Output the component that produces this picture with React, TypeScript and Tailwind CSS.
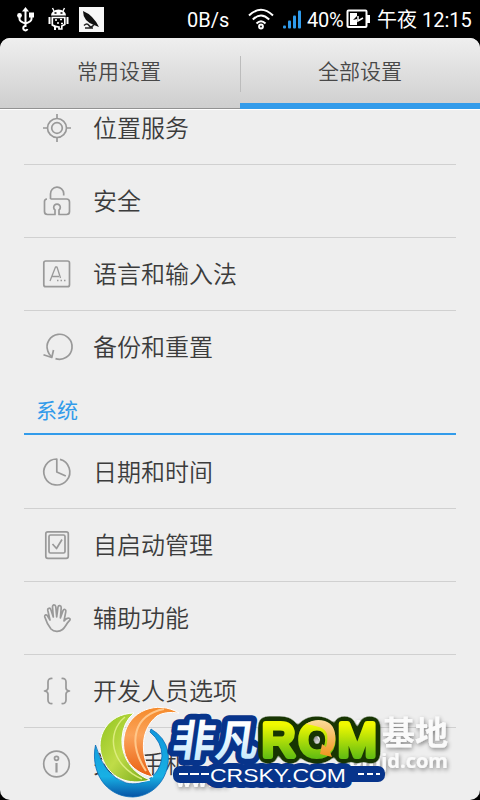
import type { ReactNode } from "react"

interface SettingItem {
  label: string
  icon: ReactNode
}

const generalItems: SettingItem[] = [
  {
    label: "位置服务",
    icon: (
      <>
        <circle cx="15" cy="15" r="9.5" />
        <circle cx="15" cy="15" r="5.3" />
        <path d="M15 1v5M15 24v5M1 15h5M24 15h5" />
      </>
    ),
  },
  {
    label: "安全",
    icon: (
      <>
        <path d="M8.500 13V8a6.600 6.600 0 0 1 13.200-.6v2" />
        <path d="M5 13q-2.500.3-2.500 2.500v10q0 3 3 3h7.500v-4.500a3.300 3.300 0 1 1 4 0v4.500h7.500q3 0 3-3v-9.500q0-3-3-3h-16" />
      </>
    ),
  },
  {
    label: "语言和输入法",
    icon: (
      <>
        <rect x="1.8" y="2" width="25.7" height="25.7" rx="2" />
        <path d="M8 22l5.500-14h1.500l3.500 11M10 17.500h7" strokeWidth="1.3" />
        <path d="M15 21.500h1.500M18.500 21.500h1.500M22 21.500h1.500" />
      </>
    ),
  },
  {
    label: "备份和重置",
    icon: (
      <>
        <path d="M13.500 26.600A12.500 12.500 0 1 0 5.800 19q.7 3 4 6" />
        <path d="M1.500 22.800l8.300 2.700L11.500 18" />
      </>
    ),
  },
]

const systemItems: SettingItem[] = [
  {
    label: "日期和时间",
    icon: <path d="M18 2.400A13 13 0 1 1 14.800 2v13l9 4" />,
  },
  {
    label: "自启动管理",
    icon: (
      <>
        <rect x="3.800" y="1.800" width="22.500" height="26.500" rx="2" />
        <rect x="7" y="5" width="16" height="18" rx="1.500" />
        <path d="M10.500 14l4 4.500L20 9.500" />
      </>
    ),
  },
  {
    label: "辅助功能",
    icon: (
      <path d="M9 26C6 22 4 18 2.800 14c-.6-2.500 2-3 2.900-.8L8 17 5.800 7.500C5.300 5 8.200 4.300 8.900 6.800L11.300 14 10.500 4c-.1-2.700 3-2.700 3.300-.1l.9 10L16 4.200c.4-2.400 3.400-2 3.200.5l-.8 10.200 2.600-7.300c.9-2.100 3.400-1.300 2.800 1L22 18c2-2.800 3.500-3.400 5.200-2.800 1.800.7.800 2-.2 3-3 3-3.800 6.200-6.500 8.300-3.200 2.700-8.500 2.500-11.500-.5z" />
    ),
  },
  {
    label: "开发人员选项",
    icon: (
      <>
        <path d="M10.500 2.500Q6 2 6 6v6q0 2.500-3.500 3Q6 15.500 6 18v6q0 4 4.500 3.500" />
        <path d="M19.500 2.500Q24 2 24 6v6q0 2.500 3.500 3Q24 15.500 24 18v6q0 4-4.500 3.500" />
      </>
    ),
  },
  {
    label: "关于手机",
    icon: (
      <>
        <circle cx="14.500" cy="15" r="12.800" />
        <circle cx="14.500" cy="9.300" r="2" />
        <path d="M14.500 14v9.500" strokeWidth="2.200" />
      </>
    ),
  },
]

function StatusBar() {
  return (
    <div className="flex h-[38px] items-center whitespace-nowrap font-[Roboto,'Noto_Sans_CJK_SC',sans-serif] text-[20px] text-white">
      {/* usb */}
      <svg className="ml-[16px] h-[26px] w-[20px]" viewBox="0 0 20 26" fill="none" stroke="white" strokeWidth="2">
        <path d="M9.500 4v17M3.500 10v3q0 2.500 6 4.500 6-2 6-4.500v-3" />
        <path d="M9.500 1l3.500 4.500H6z" fill="white" stroke="none" />
        <circle cx="3.500" cy="9.500" r="2.400" fill="white" stroke="none" />
        <path d="M13 6.500h5v5h-5z" fill="white" stroke="none" />
        <path d="M9.500 20a2.200 2.200 0 1 0 2 3" />
      </svg>
      {/* debug robot */}
      <svg className="ml-[12px] h-[26px] w-[21px]" viewBox="0 0 21 26">
        <path d="M3 9.500a7.500 6 0 0 1 15 0z" fill="white" />
        <path d="M6 5L4.500 2M15 5l1.500-3" stroke="white" strokeWidth="1.400" />
        <path d="M6.500 7h2M12.500 7h2" stroke="black" strokeWidth="1.500" />
        <path d="M4.300 11.500h12.500v7l-3 1.500v3H11V21q-4 0-6.700-2z" fill="none" stroke="white" strokeWidth="1.700" />
        <path d="M1.500 11v7M19.500 11v7M7 21v3" stroke="white" strokeWidth="2" />
        <path d="M7 14h2M12 13.500h2M9 17h2M13 17.500h2" stroke="white" strokeWidth="1.500" />
      </svg>
      {/* app notification */}
      <svg className="ml-[10px] h-[25px] w-[25px]" viewBox="0 0 25 25">
        <path d="M0 0h25v25H0z" fill="#f7f7f7" />
        <path d="M4 4q10 4 16 16l-5-2Q4 14 4 4z" fill="#111" />
        <path d="M5 18.500q3-3 5 0t5-1M6 21h8" fill="none" stroke="#222" strokeWidth="1.500" />
      </svg>
      <span className="ml-[83px] mt-[2px] w-[43px] leading-none">0B/s</span>
      {/* wifi */}
      <svg className="ml-[18px] h-[22px] w-[26px]" viewBox="0 0 26 22" fill="none" stroke="white" strokeWidth="2">
        <path d="M1 7.500q12-11.500 24 0M4.800 11.500q8.200-8 16.400 0M8.500 15.500q4.500-4.500 9 0" />
        <circle cx="13" cy="18.500" r="1.900" />
      </svg>
      {/* signal */}
      <svg className="ml-[9px] h-[19px] w-[19px]" viewBox="0 0 19 19" fill="#2f9bec">
        <rect x="0" y="15.500" width="3" height="3" rx="1" />
        <rect x="5" y="10.500" width="3" height="8" rx="1" />
        <rect x="10" y="5.500" width="3" height="13" rx="1" />
        <rect x="15" y="0.500" width="3" height="18" rx="1" />
      </svg>
      <span className="ml-[5px] mt-[2px] w-[37px] leading-none tracking-[-0.3px]">40%</span>
      {/* battery */}
      <svg className="ml-[2px] h-[20px] w-[25px]" viewBox="0 0 25 20" fill="none" stroke="white" strokeWidth="2">
        <rect x="1.500" y="1.500" width="19" height="16.500" rx="1" />
        <path d="M22.500 6v8" strokeWidth="3" />
        <path d="M4 4h7v3l-4 4 4-1v6H4z" fill="white" stroke="none" />
        <path d="M12 7v5l5-3" strokeWidth="1.500" />
      </svg>
      <span className="ml-[6px] mt-[2px] leading-none">午夜 12:15</span>
    </div>
  )
}

function SettingRow({ label, icon }: SettingItem) {
  return (
    <div className="flex h-[73px] items-center border-b border-[#d0d0d0] pl-[18px] last:border-transparent">
      <svg className="h-[30px] w-[30px] overflow-visible" viewBox="0 0 30 30" fill="none" stroke="#999" strokeWidth="1.7" strokeLinejoin="round">
        {icon}
      </svg>
      <span className="-mt-[2px] ml-[21px] text-[24px] font-[350] leading-[30px] text-[#3c3c3c]">{label}</span>
    </div>
  )
}

function Logo() {
  return (
    <svg className="absolute left-[80px] top-[690px] h-[110px] w-[400px]" viewBox="80 690 400 110">
      <defs>
        <linearGradient id="green" x1="0" y1="0" x2="1" y2="1">
          <stop offset="0" stopColor="#8fc31d" />
          <stop offset="0.5" stopColor="#c0dc48" />
          <stop offset="1" stopColor="#74a818" />
        </linearGradient>
        <linearGradient id="orange" x1="0" y1="0" x2="0" y2="1">
          <stop offset="0" stopColor="#f58a2a" />
          <stop offset="0.4" stopColor="#fba35a" />
          <stop offset="1" stopColor="#e95f10" />
        </linearGradient>
        <linearGradient id="blue" x1="0" y1="0" x2="0" y2="1">
          <stop offset="0" stopColor="#1098dc" />
          <stop offset="0.7" stopColor="#18b0e4" />
          <stop offset="1" stopColor="#0753a5" />
        </linearGradient>
        <linearGradient id="ice" x1="0" y1="0" x2="0" y2="1">
          <stop offset="0.3" stopColor="#fff" />
          <stop offset="1" stopColor="#b9e5fc" />
        </linearGradient>
        <linearGradient id="lime" gradientUnits="userSpaceOnUse" x1="0" y1="721" x2="0" y2="758">
          <stop offset="0.1" stopColor="#f0f900" />
          <stop offset="1" stopColor="#62bd12" />
        </linearGradient>
        <linearGradient id="gold" x1="0" y1="0" x2="0" y2="1">
          <stop offset="0" stopColor="#fbdc9a" />
          <stop offset="1" stopColor="#f0951c" />
        </linearGradient>
        <filter id="shade" x="-20%" y="-20%" width="140%" height="150%">
          <feDropShadow dx="1" dy="2" stdDeviation="2" floodColor="#000" floodOpacity="0.45" />
        </filter>
        {/* rounded outline around the lettering */}
        <filter id="rim" x="-20%" y="-30%" width="140%" height="160%" colorInterpolationFilters="sRGB">
          <feGaussianBlur in="SourceAlpha" stdDeviation="3" />
          <feComponentTransfer>
            <feFuncA type="linear" slope="18" intercept="-0.8" />
          </feComponentTransfer>
          <feComposite in2="SourceAlpha" operator="over" result="grown" />
          <feFlood floodColor="#173502" />
          <feComposite in2="grown" operator="in" />
          <feMerge>
            <feMergeNode />
            <feMergeNode in="SourceGraphic" />
          </feMerge>
        </filter>
      </defs>
      {/* site name behind the logo */}
      <g fill="#fafafa" filter="url(#shade)" fontWeight="700">
        <text x="448" y="745" textAnchor="end" fontSize="33" fontFamily="'Noto Sans CJK SC', sans-serif">ROM基地</text>
        <text x="448" y="768" textAnchor="end" fontSize="20" fontFamily="'Open Sans', sans-serif">romjd.com</text>
        <text x="176" y="787" fontSize="18" fontFamily="'Open Sans', sans-serif">www.</text>
      </g>
      {/* swirl */}
      <path d="M95.500 745C90 772 106 797 133 797C156 796 171 775 168 752Q165 737 151 729L150 732Q162 742 162 756C160 776 144 787 126 783Q104 776 95.500 745z" fill="url(#blue)" stroke="#086bb8" strokeWidth="0.8" />
      <path d="M134 713C107 714 95 737 102 757C109 778 128 786 150 780C132 773 121 757 122 738Q123 722 134 713z" fill="url(#green)" stroke="#fff" strokeWidth="1" />
      <path d="M125 717C105 733 111 766 142 779" fill="none" stroke="#dcec7c" strokeWidth="1.5" />
      <path d="M179 713C158 700 128 710 124 737C121 760 134 773 153 777C141 760 138 731 157 716Q165 711 179 713z" fill="url(#orange)" stroke="#fff" strokeWidth="1" />
      <path d="M164 709C134 715 127 742 146 771" fill="none" stroke="#ffc78a" strokeWidth="2" />
      {/* brand */}
      <g strokeLinejoin="round" paintOrder="stroke">
        <rect x="173" y="766" width="40" height="17" rx="7" fill="#07348b" />
        <rect x="344" y="766" width="41" height="16" rx="7" fill="#07348b" />
        <text x="210" y="782" fontSize="18" textLength="136" lengthAdjust="spacingAndGlyphs" fontFamily="'Liberation Sans', sans-serif" fill="#fff" stroke="#07348b" strokeWidth="12">CRSKY.COM</text>
        <text x="277" y="756" transform="skewX(-8)" fontSize="43" fontWeight="700" fontFamily="'Noto Sans CJK SC', sans-serif" fill="url(#ice)" stroke="#07348b" strokeWidth="12">非凡</text>
      </g>
      <text x="262 299 338" y="755.5" fontSize="46" fontFamily="'Liberation Sans', sans-serif" fill="url(#lime)" stroke="url(#lime)" strokeWidth="6" strokeLinejoin="round" filter="url(#rim)">ROM</text>
      <path d="M179 774h9M190 774h9M201 774h8M358 774h6M367 774h6M376 774h4" stroke="white" strokeWidth="2" />
      <path d="M306 724Q315 718 325 721Q337 725 335 742Q334 749 330 752L332 757L320 754L322 744L326 747Q331 730 319 727Q312 725 306 724z" fill="url(#gold)" />
    </svg>
  )
}

export default function App() {
  return (
    <div className="relative h-[800px] w-[480px] overflow-hidden bg-black font-['Noto_Sans_CJK_SC',sans-serif]">
      <StatusBar />
      <div className="h-[762px] overflow-hidden rounded-[10px] bg-[#eeeeee]">
        <div className="relative flex h-[71px] bg-linear-to-b from-[#efefef] to-[#cecece] text-[21px] font-[350] text-[#484848]">
          <div className="flex w-1/2 items-center justify-center border-b border-[#929292] pb-[5px] pr-[2px]">常用设置</div>
          <div className="absolute left-[240px] top-[18px] h-[36px] w-px bg-[#bcbcbc]" />
          <div className="flex w-1/2 items-center justify-center border-b-[6px] border-[#329bea]">全部设置</div>
        </div>
        <div className="h-[691px] overflow-hidden border-t border-white px-[24px]">
          <div className="-mt-[18px]">
            {generalItems.map((item) => (
              <SettingRow key={item.label} {...item} />
            ))}
          </div>
          <div className="mb-px h-[51px] border-b-2 border-[#329bea] pl-[12px] pt-[10px] text-[21px] leading-[30px] text-[#329bea]">系统</div>
          <div>
            {systemItems.map((item) => (
              <SettingRow key={item.label} {...item} />
            ))}
          </div>
        </div>
      </div>
      <Logo />
    </div>
  )
}
